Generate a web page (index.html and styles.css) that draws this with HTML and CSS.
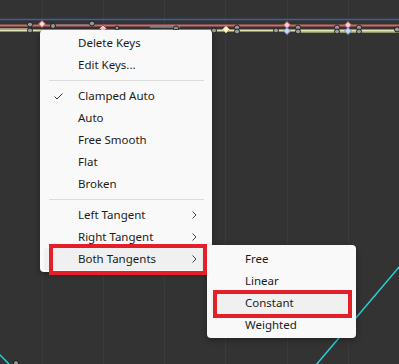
FILE: index.html
```html
<!DOCTYPE html>
<html lang="en">
<head>
<meta charset="UTF-8">
<meta name="viewport" content="width=device-width, initial-scale=1.0">
<title>Curve Editor</title>
<link rel="stylesheet" href="styles.css">
</head>
<body>

<div class="graph">
    <svg class="curves" width="399" height="364" viewBox="0 0 399 364">
        <!-- grid -->
        <g stroke="#3b3b3b" stroke-width="1">
            <line x1="42.5" y1="0" x2="42.5" y2="364"/>
            <line x1="103.5" y1="0" x2="103.5" y2="364"/>
            <line x1="164.5" y1="0" x2="164.5" y2="364"/>
            <line x1="225.5" y1="0" x2="225.5" y2="364"/>
            <line x1="287.5" y1="0" x2="287.5" y2="364"/>
            <line x1="348.5" y1="0" x2="348.5" y2="364"/>
        </g>
        <line x1="0" y1="19.5" x2="399" y2="19.5" stroke="#3c5fa3" stroke-width="1.5"/>

        <!-- curves -->
        <line x1="0" y1="25.5" x2="399" y2="25.5" stroke="#cf6a66" stroke-width="2"/>
        <line x1="55" y1="25" x2="92" y2="25" stroke="#8a8a8a" stroke-width="1"/>
        <line x1="150" y1="27" x2="180" y2="27" stroke="#8a8a8a" stroke-width="1.5"/>
        <line x1="0" y1="30.5" x2="399" y2="30.5" stroke="#e4e4b2" stroke-width="2"/>
        <line x1="0" y1="29" x2="30" y2="29" stroke="#b9b9a0" stroke-width="1.5"/>
        <line x1="176" y1="32" x2="214" y2="32" stroke="#ffffff" stroke-width="1.5"/>
        <line x1="300" y1="32" x2="399" y2="32" stroke="#f1f1a0" stroke-width="1"/>

        <!-- keys -->
        <g fill="#9a9a9a" stroke="#1e1e1e" stroke-width="1">
            <circle cx="30" cy="24.5" r="2.5"/>
            <circle cx="30" cy="30.5" r="2.5"/>
            <circle cx="53" cy="26" r="2.5"/>
            <circle cx="92" cy="23.5" r="2.5"/>
            <circle cx="117" cy="28" r="2"/>
            <circle cx="176" cy="28.5" r="2.5"/>
            <circle cx="176" cy="32" r="2.5"/>
            <circle cx="214" cy="30.5" r="2.5"/>
            <circle cx="237" cy="27.5" r="2.5"/>
            <circle cx="237" cy="31.5" r="2.5"/>
            <circle cx="276" cy="30.5" r="2.5"/>
            <circle cx="298" cy="27.5" r="2.5"/>
            <circle cx="298" cy="31.5" r="2.5"/>
            <circle cx="337" cy="27.5" r="2.5"/>
            <circle cx="337" cy="31.5" r="2.5"/>
            <circle cx="359" cy="27.5" r="2.5"/>
            <circle cx="359" cy="31.5" r="2.5"/>
            <circle cx="397" cy="29.5" r="2.5"/>
        </g>
        <g stroke="#c24a48" stroke-width="1">
            <path d="M42 20.5 L45.5 24 L42 27.5 L38.5 24 Z" fill="#f3dcdc"/>
            <path d="M103 25 L106.5 28.5 L103 32 L99.5 28.5 Z" fill="#f0d0d0"/>
            <path d="M226 26 L229.5 29.5 L226 33 L222.5 29.5 Z" fill="#f6f0d8" stroke="#d8b070"/>
            <path d="M287 21.5 L290.5 25 L287 28.5 L283.5 25 Z" fill="#f3d0d0"/>
            <path d="M287 27.5 L290.5 31 L287 34.5 L283.5 31 Z" fill="#c8d6f4" stroke="#6f8cc8"/>
            <path d="M348 21.5 L351.5 25 L348 28.5 L344.5 25 Z" fill="#f3d0d0"/>
            <path d="M348 27.5 L351.5 31 L348 34.5 L344.5 31 Z" fill="#c8d6f4" stroke="#6f8cc8"/>
        </g>

        <!-- cyan curve -->
        <line x1="316" y1="365" x2="400" y2="266" stroke="#27d3d8" stroke-width="1.5"/>
        <line x1="-1" y1="354" x2="9" y2="364" stroke="#27d3d8" stroke-width="1.5"/>
        <path d="M16 360 L19 363 L16 366 L13 363 Z" fill="#8a8a8a" stroke="#1e1e1e"/>
    </svg>

    <div class="menu context-menu">
        <div class="menu-item"><span class="check"></span><span class="label">Delete Keys</span></div>
        <div class="menu-item"><span class="check"></span><span class="label">Edit Keys...</span></div>
        <div class="separator"></div>
        <div class="menu-item">
            <span class="check">
                <svg width="9" height="7" viewBox="0 0 9 7"><path d="M0.5 3.5 L3 6 L8.5 0.5" fill="none" stroke="#333" stroke-width="1"/></svg>
            </span>
            <span class="label">Clamped Auto</span>
        </div>
        <div class="menu-item"><span class="check"></span><span class="label">Auto</span></div>
        <div class="menu-item"><span class="check"></span><span class="label">Free Smooth</span></div>
        <div class="menu-item"><span class="check"></span><span class="label">Flat</span></div>
        <div class="menu-item"><span class="check"></span><span class="label">Broken</span></div>
        <div class="separator"></div>
        <div class="menu-item"><span class="check"></span><span class="label">Left Tangent</span><span class="arrow"><svg width="5" height="8" viewBox="0 0 5 8"><path d="M0.5 0.5 L4 4 L0.5 7.5" fill="none" stroke="#444" stroke-width="1"/></svg></span></div>
        <div class="menu-item"><span class="check"></span><span class="label">Right Tangent</span><span class="arrow"><svg width="5" height="8" viewBox="0 0 5 8"><path d="M0.5 0.5 L4 4 L0.5 7.5" fill="none" stroke="#444" stroke-width="1"/></svg></span></div>
        <div class="menu-item active"><span class="check"></span><span class="label">Both Tangents</span><span class="arrow"><svg width="5" height="8" viewBox="0 0 5 8"><path d="M0.5 0.5 L4 4 L0.5 7.5" fill="none" stroke="#444" stroke-width="1"/></svg></span></div>
    </div>

    <div class="menu sub-menu">
        <div class="menu-item"><span class="check"></span><span class="label">Free</span></div>
        <div class="menu-item"><span class="check"></span><span class="label">Linear</span></div>
        <div class="menu-item active"><span class="check"></span><span class="label">Constant</span></div>
        <div class="menu-item"><span class="check"></span><span class="label">Weighted</span></div>
    </div>

    <div class="callout callout-both"></div>
    <div class="callout callout-constant"></div>
</div>

</body>
</html>
```

FILE: styles.css
```css
    body {
        margin: 0;
        padding: 0;
        background-color: #333333;
        font-family: "Segoe UI", "Noto Sans", sans-serif;
        overflow: hidden;
    }
    .graph {
        position: relative;
        width: 399px;
        height: 364px;
    }
    .curves {
        display: block;
    }
    .menu {
        position: absolute;
        background-color: #f9f9f9;
        border-radius: 4px;
        box-shadow: 0 2px 6px rgba(0, 0, 0, 0.35);
        color: #1b1b1b;
        font-size: 11.5px;
    }
    .context-menu {
        left: 40px;
        top: 30px;
        width: 172px;
        padding: 2px 0;
    }
    .sub-menu {
        left: 207px;
        top: 245px;
        width: 149px;
        padding: 3px 0 2px;
    }
    .menu-item {
        display: flex;
        align-items: center;
        height: 22px;
        margin: 0 4px;
        padding-left: 10px;
        border-radius: 3px;
    }
    .menu-item.active {
        background-color: #f0f0f0;
    }
    .check {
        width: 24px;
        display: flex;
        align-items: center;
    }
    .label {
        flex: 1;
        line-height: 22px;
    }
    .arrow {
        display: flex;
        width: 5px;
        margin-right: 11px;
    }
    .separator {
        height: 1px;
        margin: 4px 8px 4px 9px;
        background-color: #dcdcdc;
    }
    .callout {
        position: absolute;
        border: 4px solid #e3202a;
        box-sizing: border-box;
    }
    .callout-both {
        left: 49px;
        top: 244px;
        width: 158px;
        height: 31px;
    }
    .callout-constant {
        left: 213px;
        top: 290px;
        width: 139px;
        height: 28px;
    }
```
